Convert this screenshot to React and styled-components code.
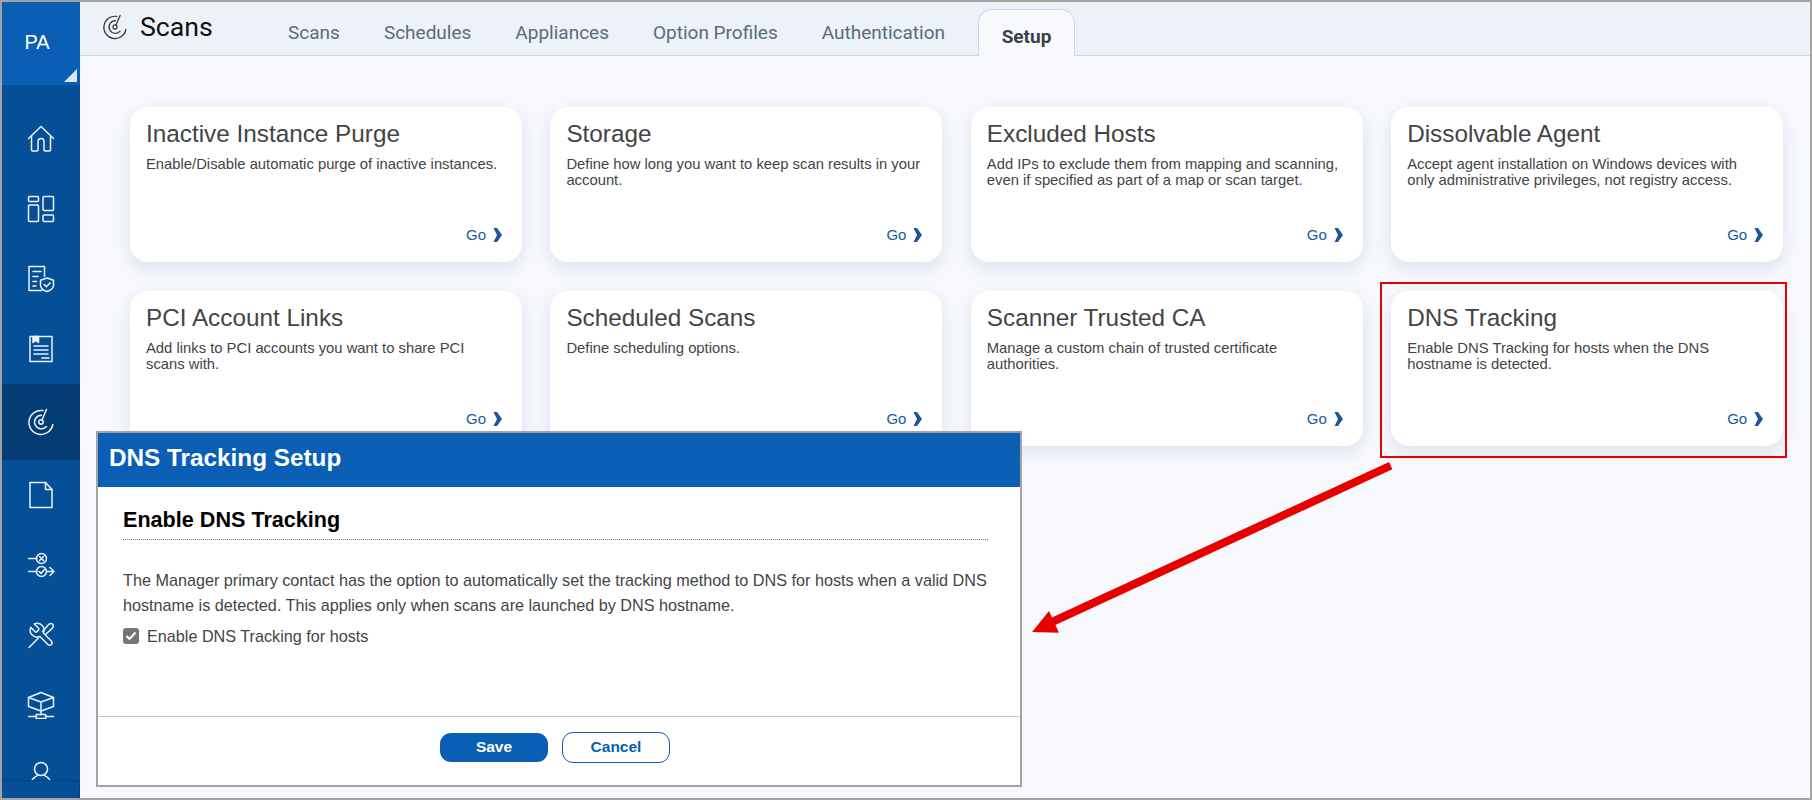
// App.jsx
import React from "react";
import styled, { createGlobalStyle } from "styled-components";

const GlobalStyle = createGlobalStyle`
  html, body {
    margin: 0;
    padding: 0;
    background: #f7f9fd;
    font-family: "Liberation Sans", Arial, sans-serif;
  }
`;

const Frame = styled.div`
  position: relative;
  box-sizing: border-box;
  width: 1812px;
  height: 800px;
  display: flex;
  border: 2px solid #a3a3a3;
  overflow: hidden;
  background: #f7f9fd;
`;

const Sidebar = styled.aside`
  position: relative;
  flex: 0 0 78px;
  background: #054f96;
  overflow: hidden;
`;

const Account = styled.div`
  position: relative;
  height: 83px;
  margin-bottom: 19px;
  background: #0a5fb4;
  color: #fff;
  font-size: 20px;
  display: flex;
  justify-content: center;
  padding-top: 29px;
  padding-right: 8px;
  box-sizing: border-box;

  &::after {
    content: "";
    position: absolute;
    right: 3px;
    bottom: 3px;
    border-style: solid;
    border-width: 0 0 13px 13px;
    border-color: transparent transparent #dbe7f5 transparent;
  }
`;

const NavItem = styled.div`
  height: ${(p) => (p.$active ? "76px" : "70px")};
  background: ${(p) => (p.$active ? "#043c74" : "transparent")};
  display: flex;
  align-items: center;
  justify-content: center;
  color: #eaf2fb;
`;

const SideFoot = styled.div`
  position: absolute;
  left: 0;
  right: 0;
  bottom: 0;
  height: 17px;
  background: #054f96;
  border-top: 1px solid #04437f;
  border-right: 1px solid #04437f;
`;

const Main = styled.main`
  flex: 1;
  display: flex;
  flex-direction: column;
  min-width: 0;
`;

const TopBar = styled.header`
  height: 54px;
  display: flex;
  background: #edf2f9;
  border-bottom: 1px solid #c3d9ef;
  box-sizing: border-box;
`;

const AppTitle = styled.div`
  width: 193px;
  padding-left: 22px;
  box-sizing: border-box;
  display: flex;
  align-items: center;
  gap: 12px;
  color: #111;
  font-family: Roboto, sans-serif;
  font-size: 26.7px;
  height: 50px;
`;

const TitleIcon = styled.span`
  display: flex;
  color: #333;
`;

const Tabs = styled.nav`
  display: flex;
  gap: 44px;
  padding-left: 15px;
`;

const Tab = styled.div`
  font-family: Roboto, sans-serif;
  font-size: 19px;
  color: #5a6b7b;
  padding-top: 21px;
  line-height: 20px;
`;

const ActiveTab = styled(Tab)`
  margin-left: -11px;
  width: 97px;
  height: 47px;
  margin-top: 7px;
  padding-top: 17px;
  box-sizing: border-box;
  text-align: center;
  font-weight: 700;
  color: #39424c;
  background: #f7f9fd;
  border: 1px solid #c3d9ef;
  border-bottom: none;
  border-radius: 14px 14px 0 0;
`;

const CardGrid = styled.section`
  display: grid;
  grid-template-columns: repeat(4, 392px);
  grid-auto-rows: 155px;
  gap: 29px 28.4px;
  padding: 51px 0 0 50px;
`;

const Card = styled.article`
  background: #fff;
  border-radius: 18px;
  padding: 13px 16px 0;
  display: flex;
  flex-direction: column;
  box-shadow: 0 6px 18px rgba(150, 160, 190, 0.28);
`;

const CardTitle = styled.h3`
  margin: 0 0 8px;
  font-size: 24.3px;
  line-height: 28px;
  font-weight: 400;
  color: #444;
`;

const CardText = styled.p`
  margin: 0;
  font-size: 14.8px;
  line-height: 16px;
  color: #444;
`;

const GoLink = styled.a`
  margin: auto 4px 18px 0;
  align-self: flex-end;
  display: flex;
  align-items: center;
  gap: 7px;
  color: #185a9d;
  font-size: 15px;
  line-height: 18px;
`;

const Highlight = styled.div`
  position: absolute;
  left: 1378px;
  top: 280px;
  width: 407px;
  height: 176px;
  box-sizing: border-box;
  border: 2px solid #e60000;
`;

const Arrow = styled.svg`
  position: absolute;
  left: 1026px;
  top: 458px;
`;

const Dialog = styled.div`
  position: absolute;
  left: 94px;
  top: 429px;
  width: 926px;
  height: 356px;
  box-sizing: border-box;
  border: 2px solid #a3a3a3;
  background: #fff;
  display: flex;
  flex-direction: column;
`;

const DialogHead = styled.div`
  height: 54px;
  flex: none;
  background: #0a5fb4;
  color: #fff;
  font-size: 24.3px;
  font-weight: 700;
  line-height: 49px;
  padding-left: 11px;
`;

const DialogBody = styled.div`
  flex: 1;
  padding: 20px 32px 0 25px;
`;

const SectionTitle = styled.h4`
  margin: 0 0 28px;
  padding-bottom: 6px;
  font-size: 21.6px;
  line-height: 26px;
  font-weight: 700;
  color: #000;
  border-bottom: 1px dotted #777;
`;

const BodyText = styled.p`
  margin: 0;
  font-size: 16.2px;
  line-height: 25.4px;
  color: #444;
`;

const CheckRow = styled.label`
  display: flex;
  align-items: center;
  gap: 8px;
  margin-top: 6px;
  font-size: 16.2px;
  line-height: 22px;
  color: #444;
`;

const CheckBox = styled.span`
  width: 16px;
  height: 16px;
  border-radius: 3px;
  background: #757575;
  display: flex;
  align-items: center;
  justify-content: center;
`;

const DialogFoot = styled.div`
  height: 69px;
  flex: none;
  box-sizing: border-box;
  border-top: 1px solid #c4c4c4;
  display: flex;
  align-items: center;
  justify-content: center;
  gap: 14px;
  padding: 0 8px 8px 0;
`;

const Button = styled.button`
  width: 108px;
  height: ${(p) => (p.$primary ? "29px" : "31px")};
  border-radius: 11px;
  border: ${(p) => (p.$primary ? "none" : "1px solid #0a5fb4")};
  background: ${(p) => (p.$primary ? "#0a5fb4" : "#fff")};
  color: ${(p) => (p.$primary ? "#fff" : "#0a5fb4")};
  font-family: "Liberation Sans", Arial, sans-serif;
  font-weight: 700;
  font-size: 15.500px;
  padding: 0;
`;

const cards = [
  ["Inactive Instance Purge", "Enable/Disable automatic purge of inactive instances."],
  ["Storage", "Define how long you want to keep scan results in your account."],
  ["Excluded Hosts", "Add IPs to exclude them from mapping and scanning, even if specified as part of a map or scan target."],
  ["Dissolvable Agent", "Accept agent installation on Windows devices with only administrative privileges, not registry access."],
  ["PCI Account Links", "Add links to PCI accounts you want to share PCI scans with."],
  ["Scheduled Scans", "Define scheduling options."],
  ["Scanner Trusted CA", "Manage a custom chain of trusted certificate authorities."],
  ["DNS Tracking", "Enable DNS Tracking for hosts when the DNS hostname is detected."],
];

const tabs = ["Scans", "Schedules", "Appliances", "Option Profiles", "Authentication"];

const Ico = ({ size = 28, children, sw = 1.5 }) => (
  <svg width={size} height={size} viewBox="0 0 28 28" fill="none" stroke="currentColor" strokeWidth={sw} strokeLinecap="round" strokeLinejoin="round">
    {children}
  </svg>
);

// radar/gauge, used in the sidebar and next to the title
const RadarIcon = ({ size, sw }) => (
  <Ico size={size} sw={sw}>
    <path d="M16 2.600A12 12 0 1 0 25.800 16.500" />
    <path d="M14.500 7.200A6.800 6.800 0 1 0 19.500 18.500" />
    <circle cx="14" cy="14" r="2.200" />
    <path d="M15 12L19.500 1.500" />
  </Ico>
);

const navIcons = [
  <Ico key="home">
    <path d="M1.500 13.500L14 1.500l12.500 12" />
    <path d="M4.500 11.500V25a1 1 0 0 0 1 1h4.500a1 1 0 0 0 1-1V16.500a3 3 0 0 1 6 0V25a1 1 0 0 0 1 1H22.500a1 1 0 0 0 1-1V11.500" />
  </Ico>,
  <Ico key="dash">
    <rect x="1.500" y="1.500" width="10" height="5" rx="1" />
    <rect x="1.500" y="10" width="10" height="16.500" rx="1" />
    <rect x="16" y="1.500" width="10.500" height="14" rx="1" />
    <rect x="16" y="20" width="10.500" height="6.500" rx="1" />
  </Ico>,
  <Ico key="policy">
    <path d="M15 25.500H2V1.500h15.500v10" />
    <path d="M6 6.500h8M6 11.500h5M6 16.500h3.500M6 21h3" />
    <path d="M20 13l6.500 2.200v4.800c0 3.200-3 5.500-6.500 6.500-3.500-1-6.500-3.300-6.500-6.500v-4.800z" />
    <path d="M17.200 19.500l2.200 2.200 3.600-3.800" />
  </Ico>,
  <Ico key="report">
    <path d="M3 1.500h22v25H3z" />
    <path d="M6 1.500h5.500v6l-2.700-2-2.800 2z" fill="currentColor" />
    <path d="M7 11h14M7 15h14M7 19h14M15 23h7" />
  </Ico>,
  <RadarIcon key="scan" />,
  <Ico key="file">
    <path d="M3 1.500h15.500l6.500 7v18H3z" />
    <path d="M18.500 1.500V8.500H25" />
  </Ico>,
  <Ico key="flow">
    <path d="M1.500 7.500h8" />
    <circle cx="14.500" cy="7.500" r="5" />
    <path d="M12.500 5.500l4 4M16.500 5.500l-4 4" />
    <path d="M1.500 20.500h8" />
    <circle cx="14.500" cy="20.500" r="5" />
    <path d="M12 20.500l2 2 3.500-4" />
    <path d="M19.500 20.500h7M23 16.500l4 4-4 4" />
  </Ico>,
  <Ico key="tools" sw={1.5}>
    <g transform="translate(28.500 0) scale(-1.150 1.150)" strokeWidth="1.300">
      <path d="M14.700 6.300a1 1 0 0 0 0 1.400l1.600 1.600a1 1 0 0 0 1.400 0l3.770-3.770a6 6 0 0 1-7.940 7.940l-6.910 6.910a2.120 2.120 0 0 1-3-3l6.910-6.910a6 6 0 0 1 7.940-7.940l-3.760 3.760z" />
    </g>
    <path d="M15.500 10.500l6.200-7c1.200-1.300 3.500-1.300 4.300.2.600 1.200.2 2.600-.8 3.700L18.500 13.500" />
    <path d="M11 17.500L4 24.500M4 24.500l-2 2" />
  </Ico>,
  <Ico key="cube">
    <path d="M14 1.500l12.500 5v9L14 20 1.500 15.500v-9z" />
    <path d="M1.500 6.500L14 11l12.500-4.500M14 11v9" />
    <path d="M14 20v3.500" />
    <path d="M1.500 25.500h8M18.500 25.500h8" />
    <rect x="9" y="23.500" width="10" height="4" rx="1" />
  </Ico>,
  <Ico key="user">
    <circle cx="14" cy="8" r="6.500" />
    <path d="M3 24c1-5 4.500-8 8-9.800M25 24c-1-5-4.500-8-8-9.800" />
  </Ico>,
];

const Chevron = () => (
  <svg width="9" height="14" viewBox="0 0 9 14">
    <path d="M.5 0h3.500L9 7 4 14H.5l3.500-7z" fill="#1f5596" />
  </svg>
);

function App() {
  return (
    <>
      <GlobalStyle />
      <Frame>
        <Sidebar>
          <Account>PA</Account>
          {navIcons.map((icon, i) => (
            <NavItem key={i} $active={i === 4}>
              {icon}
            </NavItem>
          ))}
          <SideFoot />
        </Sidebar>

        <Main>
          <TopBar>
            <AppTitle>
              <TitleIcon>
                <RadarIcon size={26} sw={1.300} />
              </TitleIcon>
              Scans
            </AppTitle>
            <Tabs>
              {tabs.map((t) => (
                <Tab key={t}>{t}</Tab>
              ))}
              <ActiveTab>Setup</ActiveTab>
            </Tabs>
          </TopBar>

          <CardGrid>
            {cards.map(([title, text]) => (
              <Card key={title}>
                <CardTitle>{title}</CardTitle>
                <CardText>{text}</CardText>
                <GoLink>
                  Go <Chevron />
                </GoLink>
              </Card>
            ))}
          </CardGrid>
        </Main>

        <Highlight />
        <Arrow width="366" height="180" viewBox="0 0 366 180">
          <path d="M362.700 5.700L24 162" stroke="#e60000" strokeWidth="8" />
          <path d="M4 172L21 151 31 172.700z" fill="#e60000" />
        </Arrow>

        <Dialog>
          <DialogHead>DNS Tracking Setup</DialogHead>
          <DialogBody>
            <SectionTitle>Enable DNS Tracking</SectionTitle>
            <BodyText>
              The Manager primary contact has the option to automatically set the tracking method to DNS for hosts when a valid DNS
              <br />
              hostname is detected. This applies only when scans are launched by DNS hostname.
            </BodyText>
            <CheckRow>
              <CheckBox>
                <svg width="12" height="10" viewBox="0 0 12 10">
                  <path d="M1.500 5l3 3 6-6.500" fill="none" stroke="#fff" strokeWidth="2.200" />
                </svg>
              </CheckBox>
              Enable DNS Tracking for hosts
            </CheckRow>
          </DialogBody>
          <DialogFoot>
            <Button $primary>Save</Button>
            <Button>Cancel</Button>
          </DialogFoot>
        </Dialog>
      </Frame>
    </>
  );
}

export default App;
